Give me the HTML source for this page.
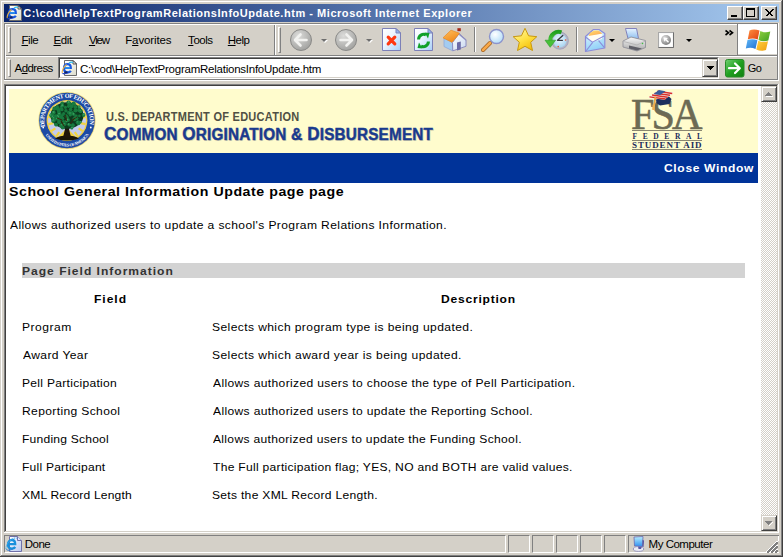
<!DOCTYPE html>
<html><head><meta charset="utf-8">
<style>
*{margin:0;padding:0;box-sizing:border-box}
html,body{width:783px;height:557px;overflow:hidden;background:#D4D0C8}
body{position:relative;font-family:"Liberation Sans",sans-serif}
.a{position:absolute}
.t{position:absolute;white-space:pre;line-height:1}
.ul{text-decoration:underline}

.btn{position:absolute;background:#D4D0C8;border-top:1px solid #fff;border-left:1px solid #fff;border-right:1px solid #404040;border-bottom:1px solid #404040;box-shadow:inset -1px -1px 0 #808080}
.sunk{position:absolute;border-top:1px solid #808080;border-left:1px solid #808080;border-right:1px solid #fff;border-bottom:1px solid #fff}
.vsep{position:absolute;width:2px;border-left:1px solid #808080;border-right:1px solid #fff}
.grip{position:absolute;width:3px;border-left:1px solid #fff;border-top:1px solid #fff;border-right:1px solid #808080;border-bottom:1px solid #808080}
</style></head><body>
<!-- window frame -->
<div class="a" style="left:0;top:0;width:783px;height:557px;background:#D4D0C8"></div>
<div class="a" style="left:1px;top:1px;width:780px;height:1px;background:#fff"></div>
<div class="a" style="left:1px;top:1px;width:1px;height:554px;background:#fff"></div>
<div class="a" style="left:781px;top:1px;width:1px;height:555px;background:#808080"></div>
<div class="a" style="left:1px;top:555px;width:781px;height:1px;background:#808080"></div>
<div class="a" style="left:782px;top:0;width:1px;height:557px;background:#404040"></div>
<div class="a" style="left:0;top:556px;width:783px;height:1px;background:#404040"></div>

<!-- title bar -->
<div class="a" style="left:4px;top:4px;width:775px;height:18px;background:linear-gradient(to right,#0A246A,#A6CAF0)"></div>

<!-- rebar -->
<div class="a" style="left:4px;top:23px;width:775px;height:1px;background:#808080"></div>
<div class="a" style="left:4px;top:24px;width:775px;height:1px;background:#fff"></div>
<div class="a" style="left:4px;top:23px;width:1px;height:57px;background:#808080"></div>
<div class="a" style="left:5px;top:24px;width:1px;height:56px;background:#fff"></div>
<div class="a" style="left:4px;top:79px;width:775px;height:1px;background:#808080"></div>
<div class="a" style="left:4px;top:80px;width:775px;height:1px;background:#fff"></div>
<div class="a" style="left:777px;top:23px;width:1px;height:57px;background:#808080"></div>
<div class="a" style="left:778px;top:23px;width:1px;height:58px;background:#fff"></div>
<div class="a" style="left:6px;top:55px;width:771px;height:1px;background:#808080"></div>
<div class="a" style="left:6px;top:56px;width:771px;height:1px;background:#fff"></div>

<!-- content frame -->
<div class="a" style="left:4px;top:84px;width:774px;height:1px;background:#808080"></div>
<div class="a" style="left:4px;top:84px;width:1px;height:449px;background:#808080"></div>
<div class="a" style="left:5px;top:85px;width:772px;height:1px;background:#404040"></div>
<div class="a" style="left:5px;top:85px;width:1px;height:447px;background:#404040"></div>
<div class="a" style="left:4px;top:532px;width:775px;height:1px;background:#fff"></div>
<div class="a" style="left:778px;top:84px;width:1px;height:449px;background:#fff"></div>
<div class="a" style="left:777px;top:85px;width:1px;height:447px;background:#D4D0C8"></div>
<div class="a" style="left:5px;top:531px;width:773px;height:1px;background:#D4D0C8"></div>
<div class="a" style="left:6px;top:86px;width:771px;height:445px;background:#fff"></div>

<!-- page content -->
<div class="a" style="left:9px;top:89px;width:749px;height:64px;background:#FFFCCD"></div>
<div class="a" style="left:9px;top:153px;width:749px;height:30px;background:#003399"></div>

<!-- scrollbar -->


<!-- title buttons -->
<div class="btn" style="left:727px;top:6px;width:16px;height:14px"><div class="a" style="left:3px;top:8px;width:6px;height:2px;background:#000"></div></div>
<div class="btn" style="left:743px;top:6px;width:16px;height:14px"><div class="a" style="left:2px;top:1px;width:9px;height:9px;border:1px solid #000;border-top-width:2px"></div></div>
<div class="btn" style="left:761px;top:6px;width:16px;height:14px"><svg class="a" style="left:3px;top:2px" width="9" height="8" viewBox="0 0 9 8"><path d="M0.5 0.5 L7.5 7.5 M1.5 0.5 L8.5 7.5 M7.5 0.5 L0.5 7.5 M8.5 0.5 L1.5 7.5" stroke="#000" stroke-width="1" shape-rendering="crispEdges"/></svg></div>
<!-- grips & separators -->
<div class="grip" style="left:8px;top:27px;height:26px"></div>
<div class="vsep" style="left:274px;top:25px;height:30px"></div>
<div class="grip" style="left:278px;top:27px;height:26px"></div>
<div class="vsep" style="left:474px;top:27px;height:25px"></div>
<div class="vsep" style="left:576px;top:27px;height:25px"></div>
<div class="grip" style="left:8px;top:59px;height:18px"></div>
<!-- windows logo panel -->
<div class="a" style="left:737px;top:23px;width:1px;height:32px;background:#808080"></div>
<div class="a" style="left:738px;top:24px;width:39px;height:30px;background:#fff"></div>
<!-- address box -->
<div class="a" style="left:58px;top:57px;width:661px;height:22px;background:#fff;border-top:1px solid #808080;border-left:1px solid #808080;border-right:1px solid #fff;border-bottom:1px solid #fff"><div class="a" style="left:0;top:0;width:659px;height:20px;border-top:1px solid #404040;border-left:1px solid #404040;border-right:1px solid #D4D0C8;border-bottom:1px solid #D4D0C8"></div></div>
<div class="btn" style="left:702px;top:59px;width:16px;height:18px;border-top-color:#D4D0C8;border-left-color:#D4D0C8;box-shadow:inset 1px 1px 0 #fff,inset -1px -1px 0 #808080"><svg class="a" style="left:4px;top:6px" width="7" height="4"><path d="M0 0h7v1h-1v1h-1v1h-1v1h-1v-1h-1v-1h-1v-1h-1z" fill="#000"/></svg></div>
<!-- scrollbar -->
<div class="a" style="left:761px;top:86px;width:16px;height:445px;background-color:#fff;background-image:repeating-conic-gradient(#D4D0C8 0 25%,#fff 0 50%);background-size:2px 2px;background-position:1px 0"></div>
<div class="btn" style="left:761px;top:86px;width:16px;height:16px;border-top-color:#D4D0C8;border-left-color:#D4D0C8;box-shadow:inset 1px 1px 0 #fff,inset -1px -1px 0 #808080"><svg class="a" style="left:3px;top:5px" width="8" height="5"><path d="M3 0h1v1h1v1h1v1h1v1H0V3h1V2h1V1h1z" fill="#808080"/><path d="M1 4h7v1H1z" fill="#fff"/></svg></div>
<div class="btn" style="left:761px;top:515px;width:16px;height:16px;border-top-color:#D4D0C8;border-left-color:#D4D0C8;box-shadow:inset 1px 1px 0 #fff,inset -1px -1px 0 #808080"><svg class="a" style="left:3px;top:5px" width="8" height="5"><path d="M0 0h7v1h-1v1h-1v1h-1v1h-1v-1h-1v-1h-1v-1h-1z" fill="#808080"/><path d="M4 4h1v-1h1v-1h1v-1h1v1h-1v1h-1v1h-1v1h-1z" fill="#fff"/></svg></div>
<!-- status bar -->
<div class="sunk" style="left:4px;top:535px;width:502px;height:18px"></div>
<div class="sunk" style="left:508px;top:535px;width:22px;height:18px"></div>
<div class="sunk" style="left:532px;top:535px;width:22px;height:18px"></div>
<div class="sunk" style="left:556px;top:535px;width:22px;height:18px"></div>
<div class="sunk" style="left:580px;top:535px;width:22px;height:18px"></div>
<div class="sunk" style="left:604px;top:535px;width:22px;height:18px"></div>
<div class="sunk" style="left:628px;top:535px;width:151px;height:18px;border-right:none"></div>
<div class="a" style="left:778px;top:536px;width:1px;height:5px;background:#fff"></div>
<!-- page gray bar -->
<div class="a" style="left:22px;top:263px;width:723px;height:15px;background:#D3D3D3"></div>


<!-- header texts -->
<div class="t" style="left:106px;top:111px;font-size:11px;font-weight:700;color:#505044;letter-spacing:0.27px;transform:scaleY(1.12);transform-origin:0 0">U.S. DEPARTMENT OF EDUCATION</div>
<div class="t" id="cod" style="left:103.5px;top:124.5px;font-weight:700;color:#1A3A8E;text-shadow:1px 1px 0 #D8D4B0;letter-spacing:0.22px;-webkit-text-stroke:0.45px #1A3A8E;transform:scaleX(0.925);transform-origin:0 0"><span style="font-size:18.5px">C</span><span style="font-size:16.5px">OMMON </span><span style="font-size:18.5px">O</span><span style="font-size:16.5px">RIGINATION </span><span style="font-size:17px">&amp; </span><span style="font-size:18.5px">D</span><span style="font-size:16.5px">ISBURSEMENT</span></div>
<div class="t" id="fsa" style="left:630.5px;top:93.3px;font-family:'Liberation Serif';font-size:43.5px;color:#6C6A54;letter-spacing:-3px;transform:scaleX(0.97);-webkit-text-stroke:0.6px #6C6A54;transform-origin:0 0">FSA</div>
<div class="a" style="left:632px;top:130px;width:70px;height:1px;background:#8A8670"></div>
<div class="t" style="left:632.5px;top:132.5px;font-family:'Liberation Serif';font-size:7.5px;font-weight:700;color:#1C2C5C;letter-spacing:5.6px">FEDERAL</div>
<div class="a" style="left:632px;top:140px;width:70px;height:1px;background:#8A8670"></div>
<div class="t" style="left:632px;top:141px;font-family:'Liberation Serif';font-size:9px;font-weight:700;color:#1C2C5C;letter-spacing:0.9px">STUDENT AID</div>
<div class="a" style="left:632px;top:149px;width:70px;height:1px;background:#8A8670"></div>
<svg class="a" style="left:0;top:0" width="783" height="183" viewBox="0 0 783 183">
<defs>
<path id="arcTop" d="M45.08 126.78A22.8 22.8 0 1 1 88.92 126.78"/>
<path id="arcBot" d="M44.95 134.28A26.0 26.0 0 0 0 89.05 134.28"/>
<radialGradient id="gfield" cx="0.5" cy="0.5" r="0.5"><stop offset="0" stop-color="#D8DCF0"/><stop offset="1" stop-color="#B8C4E8"/></radialGradient>
</defs>
<!-- seal -->
<circle cx="67" cy="120.5" r="28.6" fill="#E6D27A"/>
<circle cx="67" cy="120.5" r="27.8" fill="#1C4AA4"/>
<circle cx="67" cy="120.5" r="20.4" fill="#F0D048"/>
<circle cx="67" cy="120.5" r="19" fill="#C4CCEC"/>
<path d="M85.6 116.8L80.7 117.8 M82.8 109.9L78.6 112.7 M77.6 104.7L74.8 108.9 M70.7 101.9L69.7 106.8 M63.3 101.9L64.3 106.8 M56.4 104.7L59.2 108.9 M51.2 109.9L55.4 112.7 M48.4 116.8L53.3 117.8 M48.4 124.2L53.3 123.2 M51.2 131.1L55.4 128.3 M56.4 136.3L59.2 132.1 M63.3 139.1L64.3 134.2 M70.7 139.1L69.7 134.2 M77.6 136.3L74.8 132.1 M82.8 131.1L78.6 128.3 M85.6 124.2L80.7 123.2" stroke="#F2D440" stroke-width="2.2"/>
<text font-family="Liberation Serif" font-size="6.2" font-weight="bold" fill="#FFFFFF"><textPath href="#arcTop" textLength="82" lengthAdjust="spacing">DEPARTMENT OF EDUCATION</textPath></text>
<text font-family="Liberation Serif" font-size="4.1" font-weight="bold" fill="#FFFFFF"><textPath href="#arcBot" startOffset="1" textLength="51" lengthAdjust="spacing" dominant-baseline="auto">UNITED STATES OF AMERICA</textPath></text>
<circle cx="43.2" cy="127.5" r="0.9" fill="#fff"/><circle cx="90.8" cy="127.5" r="0.9" fill="#fff"/>
<path d="M57 138L67 128L77 138Z" fill="#F0D040"/>
<path d="M55 138.5C60 134.5 74 134.5 79 138.5C73 141 61 141 55 138.5Z" fill="#1A1408"/>
<path d="M63 137.5L65 129L60.5 123.5L63.5 122.5L67 126.5L71 121L73.5 122.5L69 129L71 137.5Z" fill="#20140A"/>
<ellipse cx="67" cy="115.5" rx="16.5" ry="13.2" fill="#0C3A1E"/>
<g fill="#187A3E"><circle cx="61.3" cy="106.4" r="1.5"/><circle cx="72.8" cy="104.1" r="1.5"/><circle cx="68.8" cy="112.6" r="1.9"/><circle cx="52.0" cy="116.7" r="1.7"/><circle cx="51.3" cy="114.6" r="1.7"/><circle cx="54.3" cy="108.5" r="1.9"/><circle cx="70.2" cy="113.5" r="2.0"/><circle cx="80.0" cy="110.4" r="1.7"/><circle cx="60.8" cy="125.7" r="1.8"/><circle cx="56.3" cy="118.9" r="1.7"/><circle cx="72.4" cy="112.8" r="1.7"/><circle cx="69.2" cy="103.8" r="1.9"/><circle cx="73.8" cy="114.4" r="1.7"/><circle cx="61.0" cy="119.0" r="1.7"/><circle cx="65.9" cy="110.7" r="1.7"/><circle cx="77.8" cy="122.3" r="2.1"/><circle cx="58.5" cy="118.7" r="1.9"/><circle cx="75.5" cy="110.4" r="2.0"/><circle cx="64.6" cy="124.0" r="2.1"/><circle cx="55.3" cy="116.2" r="1.5"/><circle cx="76.8" cy="118.6" r="1.7"/><circle cx="80.6" cy="111.1" r="2.1"/><circle cx="74.3" cy="119.2" r="2.0"/><circle cx="70.3" cy="115.2" r="1.4"/><circle cx="66.6" cy="121.3" r="1.4"/><circle cx="78.8" cy="110.3" r="1.7"/><circle cx="63.5" cy="121.4" r="1.4"/><circle cx="50.8" cy="115.4" r="1.5"/><circle cx="54.5" cy="109.2" r="1.4"/><circle cx="52.8" cy="115.0" r="1.8"/><circle cx="59.7" cy="114.0" r="1.9"/><circle cx="62.6" cy="127.6" r="2.0"/><circle cx="56.2" cy="108.7" r="1.4"/><circle cx="58.2" cy="116.1" r="1.9"/><circle cx="70.6" cy="109.6" r="1.8"/><circle cx="62.9" cy="118.4" r="1.4"/><circle cx="68.0" cy="119.9" r="2.0"/><circle cx="73.7" cy="103.6" r="2.1"/><circle cx="63.7" cy="113.6" r="1.5"/><circle cx="53.6" cy="120.4" r="2.1"/><circle cx="57.3" cy="106.7" r="1.6"/><circle cx="61.9" cy="103.5" r="1.7"/><circle cx="53.6" cy="112.5" r="2.1"/><circle cx="71.5" cy="106.3" r="2.0"/><circle cx="58.8" cy="112.1" r="1.4"/><circle cx="62.7" cy="105.6" r="1.6"/><circle cx="66.3" cy="116.0" r="1.7"/><circle cx="62.0" cy="109.7" r="1.6"/><circle cx="79.0" cy="106.7" r="1.5"/><circle cx="68.5" cy="106.3" r="1.6"/><circle cx="69.0" cy="102.8" r="1.9"/><circle cx="80.2" cy="122.2" r="1.3"/><circle cx="59.1" cy="112.6" r="1.7"/><circle cx="55.8" cy="124.4" r="1.7"/><circle cx="68.6" cy="124.6" r="1.3"/><circle cx="61.5" cy="108.5" r="1.6"/><circle cx="78.6" cy="123.5" r="1.8"/><circle cx="57.9" cy="117.0" r="1.7"/><circle cx="62.4" cy="102.8" r="1.4"/><circle cx="59.1" cy="122.1" r="2.1"/><circle cx="83.5" cy="115.0" r="1.9"/><circle cx="57.7" cy="108.6" r="2.1"/><circle cx="56.9" cy="107.9" r="1.4"/><circle cx="71.8" cy="128.1" r="1.5"/><circle cx="79.4" cy="115.9" r="1.3"/><circle cx="72.9" cy="125.2" r="1.9"/><circle cx="53.0" cy="121.2" r="1.5"/><circle cx="76.3" cy="115.9" r="1.4"/><circle cx="56.2" cy="124.9" r="1.6"/><circle cx="61.6" cy="125.2" r="2.0"/><circle cx="75.4" cy="106.9" r="2.0"/><circle cx="62.3" cy="117.9" r="1.5"/><circle cx="78.9" cy="108.1" r="1.4"/><circle cx="58.8" cy="110.5" r="2.0"/><circle cx="58.4" cy="119.0" r="1.8"/><circle cx="59.1" cy="114.2" r="1.9"/><circle cx="62.4" cy="115.3" r="1.4"/><circle cx="67.6" cy="117.4" r="1.3"/><circle cx="68.3" cy="102.5" r="1.9"/><circle cx="65.4" cy="107.3" r="1.6"/><circle cx="56.0" cy="115.7" r="1.4"/><circle cx="75.4" cy="118.1" r="2.1"/><circle cx="61.4" cy="117.0" r="1.8"/><circle cx="69.4" cy="124.7" r="1.9"/><circle cx="53.7" cy="118.2" r="1.4"/></g>
<g fill="#3C9E60"><circle cx="61.7" cy="105.9" r="0.6"/><circle cx="52.4" cy="116.2" r="0.8"/><circle cx="70.0" cy="113.0" r="0.8"/><circle cx="56.8" cy="118.4" r="0.7"/><circle cx="73.4" cy="113.9" r="0.8"/><circle cx="77.5" cy="121.8" r="0.6"/><circle cx="64.3" cy="123.5" r="0.6"/><circle cx="80.3" cy="110.6" r="0.7"/><circle cx="66.4" cy="120.8" r="0.9"/><circle cx="50.6" cy="114.9" r="0.8"/><circle cx="59.4" cy="113.5" r="0.7"/><circle cx="57.7" cy="115.6" r="0.7"/><circle cx="67.6" cy="119.4" r="0.9"/><circle cx="53.7" cy="119.9" r="0.7"/><circle cx="53.5" cy="112.0" r="1.0"/><circle cx="62.4" cy="105.1" r="0.9"/><circle cx="78.9" cy="106.2" r="0.8"/><circle cx="80.6" cy="121.7" r="0.8"/><circle cx="68.6" cy="124.1" r="0.9"/><circle cx="58.4" cy="116.5" r="0.7"/><circle cx="83.8" cy="114.5" r="0.9"/><circle cx="72.0" cy="127.6" r="0.8"/><circle cx="52.8" cy="120.7" r="0.6"/><circle cx="61.3" cy="124.7" r="0.6"/><circle cx="79.2" cy="107.6" r="0.7"/><circle cx="58.7" cy="113.7" r="0.6"/><circle cx="68.7" cy="102.0" r="0.9"/><circle cx="75.6" cy="117.6" r="0.7"/><circle cx="53.5" cy="117.7" r="0.7"/></g>
<path d="M64 126L61 121M70 124L74 119M66.5 121L65.5 115M62 120L57 118M72 120L77 117" stroke="#3A240C" stroke-width="1"/>
<!-- FSA cap -->
<path d="M656 99.5L668.5 96L671.5 99L669.5 104L660 105.5L656.5 103Z" fill="#1C2E5E"/>
<path d="M648.2 97.8L658.9 90.1L673.7 92.4L664.5 99.8Z" fill="#F4EEF0"/>
<path d="M649.48 96.88L665.60 98.91 M652.05 95.03L667.81 97.14 M654.62 93.18L670.02 95.36 M657.19 91.33L672.23 93.58" stroke="#D8302A" stroke-width="1.5"/>
<path d="M653.55 93.95L658.90 90.10L665.56 91.14L660.21 94.98Z" fill="#3A5A9A"/>
<path d="M655.5 96.5L653.5 109" stroke="#E8A848" stroke-width="1.8"/>
<path d="M652.5 104.5L654.8 104.5L654.6 110L652.3 110Z" fill="#F0B050"/>
</svg>
<svg class="a" style="left:0;top:0" width="783" height="557" viewBox="0 0 783 557">
<defs>
<linearGradient id="gpg" x1="0" y1="0" x2="1" y2="1"><stop offset="0" stop-color="#FFFFFF"/><stop offset="1" stop-color="#DCDCCC"/></linearGradient>
<linearGradient id="gpgb" x1="0" y1="0" x2="1" y2="1"><stop offset="0" stop-color="#FFFFFF"/><stop offset="1" stop-color="#B8C8F0"/></linearGradient>
<linearGradient id="ge" x1="0" y1="0" x2="0" y2="1"><stop offset="0" stop-color="#30B8F8"/><stop offset="1" stop-color="#1040C8"/></linearGradient>
<linearGradient id="gmon" x1="0" y1="0" x2="0" y2="1"><stop offset="0" stop-color="#B8F0FF"/><stop offset="1" stop-color="#3090F0"/></linearGradient>
<g id="iepage">
<path d="M3.5 0.5H12L15.5 4V15.5H3.5Z" fill="url(#gpg)" stroke="#6A6A6A"/>
<path d="M12 0.5V4H15.5Z" fill="#303030" stroke="#5A5A5A" stroke-linejoin="round"/>
<path d="M12.5 1.5L14.5 3.5H12.5Z" fill="#FFFFFF"/>
</g>
<g id="iee">
<path d="M3.2 8H9.8C9.8 5.6 8.4 4.2 6.6 4.2C4.6 4.2 3 5.8 3 8.3C3 10.8 4.6 12.4 6.8 12.4C8.2 12.4 9.2 11.8 9.9 10.8" fill="none" stroke="#1858E0" stroke-width="2.2"/>
<path d="M1.2 13C0.6 11 2.5 7 5.5 4.5" fill="none" stroke="#E8B040" stroke-width="1.1"/>
<path d="M1.5 13.3C3 14.5 5.5 13.5 7.5 12.6" fill="none" stroke="#2040C0" stroke-width="1.1"/>
<path d="M8 3C9.5 2 11 1.8 12 2.5" fill="none" stroke="#30C0F0" stroke-width="1.2"/>
<rect x="4" y="7.2" width="5" height="1.4" fill="#30A0F0"/>
<rect x="3.5" y="11.5" width="3" height="1.3" fill="#101840"/>
</g>
</defs>
<!-- title bar icon -->
<g transform="translate(6,5)"><use href="#iepage"/><use href="#iee"/></g>
<!-- address icon -->
<g transform="translate(61,60)"><use href="#iepage"/><use href="#iee"/></g>
<!-- status icon -->
<g transform="translate(5,536)">
<path d="M4.5 0.5H12.5L16.5 4.5V15.5H4.5Z" fill="url(#gpgb)" stroke="#7070A8"/>
<path d="M12.5 0.5V4.5H16.5" fill="#DDE6FF" stroke="#7070A8"/>
<path d="M3.2 8.2H10.2C10.2 5.6 8.6 4 6.8 4C4.6 4 3 5.8 3 8.4C3 11 4.6 12.6 7 12.6C8.4 12.6 9.6 12 10.3 11" fill="none" stroke="#1A90DC" stroke-width="2.3"/>
<path d="M1 13C0.4 11 2.5 6.5 6 3.8C8.5 2 10.5 1.6 11.8 2.2" fill="none" stroke="#40B0F0" stroke-width="1" stroke-dasharray="1.5 0.8"/>
<path d="M1.3 13.5C3 15 6 14 8 12.8" fill="none" stroke="#2A7AD0" stroke-width="1"/>
</g>
<!-- my computer -->
<path d="M634 537L643 536.5L642.5 546.5L634.5 546Z" fill="url(#gmon)" stroke="#6A6AB0" stroke-width="0.8"/>
<path d="M642.6 540L644 540.5L643.5 547L642.5 546.5Z" fill="#5050A0"/>
<ellipse cx="638.5" cy="549" rx="5.2" ry="2.4" fill="#ECECF4" stroke="#8888B8" stroke-width="0.8"/>
<path d="M638 546.5L642 546.5L641 549L638.5 549Z" fill="#5858A8"/>
<!-- resize grip -->
<g stroke-width="1" shape-rendering="crispEdges">
<path d="M766 552.5L777.5 541" stroke="#FFFFFF"/>
<path d="M767 552.5L777.5 542M768 552.5L777.5 543" stroke="#808080"/>
<path d="M770 552.5L777.5 545" stroke="#FFFFFF"/>
<path d="M771 552.5L777.5 546M772 552.5L777.5 547" stroke="#808080"/>
<path d="M774 552.5L777.5 549" stroke="#FFFFFF"/>
<path d="M775 552.5L777.5 550M776 552.5L777.5 551" stroke="#808080"/>
</g>
</svg>
<svg class="a" style="left:0;top:0" width="783" height="90" viewBox="0 0 783 90">
<defs>
<radialGradient id="gb" cx="0.38" cy="0.3" r="0.8"><stop offset="0" stop-color="#DCDCDA"/><stop offset="1" stop-color="#9C9C9A"/></radialGradient>
<linearGradient id="gp" x1="0" y1="0" x2="1" y2="1"><stop offset="0" stop-color="#FFFFFF"/><stop offset="0.4" stop-color="#EEF6FF"/><stop offset="1" stop-color="#A8D0F8"/></linearGradient>
<linearGradient id="groof" x1="0" y1="0" x2="0.6" y2="1"><stop offset="0" stop-color="#FFC060"/><stop offset="1" stop-color="#F08818"/></linearGradient>
<linearGradient id="gwall" x1="0" y1="0" x2="1" y2="1"><stop offset="0" stop-color="#FFFFFF"/><stop offset="1" stop-color="#C8D8F0"/></linearGradient>
<linearGradient id="gstar" x1="0.2" y1="0" x2="0.8" y2="1"><stop offset="0" stop-color="#FFF6A0"/><stop offset="0.5" stop-color="#FFE040"/><stop offset="1" stop-color="#F0B800"/></linearGradient>
<radialGradient id="glens" cx="0.4" cy="0.35" r="0.7"><stop offset="0" stop-color="#FFFFFF"/><stop offset="1" stop-color="#B0DCF8"/></radialGradient>
<linearGradient id="gmail" x1="0" y1="0" x2="0.3" y2="1"><stop offset="0" stop-color="#E8FCFF"/><stop offset="1" stop-color="#90D0F8"/></linearGradient>
<linearGradient id="gletter" x1="0" y1="0" x2="1" y2="1"><stop offset="0" stop-color="#FFE070"/><stop offset="1" stop-color="#FFA050"/></linearGradient>
<linearGradient id="gprn" x1="0" y1="0" x2="0" y2="1"><stop offset="0" stop-color="#F8F8F8"/><stop offset="1" stop-color="#A8A8A8"/></linearGradient>
<linearGradient id="gpaper" x1="0" y1="0" x2="0" y2="1"><stop offset="0" stop-color="#E8F4FF"/><stop offset="1" stop-color="#90C0F0"/></linearGradient>
<radialGradient id="gmsg" cx="0.35" cy="0.3" r="0.75"><stop offset="0" stop-color="#E0E0E0"/><stop offset="1" stop-color="#7C7C7C"/></radialGradient>
<linearGradient id="ggo" x1="0" y1="0" x2="1" y2="1"><stop offset="0" stop-color="#70D070"/><stop offset="0.5" stop-color="#20A020"/><stop offset="1" stop-color="#108010"/></linearGradient>
<linearGradient id="gwo" x1="0" y1="0" x2="1" y2="1"><stop offset="0" stop-color="#FF9040"/><stop offset="1" stop-color="#E04010"/></linearGradient>
<linearGradient id="gwg" x1="0" y1="0" x2="1" y2="1"><stop offset="0" stop-color="#90D040"/><stop offset="1" stop-color="#40A020"/></linearGradient>
<linearGradient id="gwb" x1="0" y1="0" x2="1" y2="1"><stop offset="0" stop-color="#60B8F8"/><stop offset="1" stop-color="#2070D0"/></linearGradient>
<linearGradient id="gwy" x1="0" y1="0" x2="1" y2="1"><stop offset="0" stop-color="#FFD040"/><stop offset="1" stop-color="#F0A010"/></linearGradient>
<radialGradient id="gclock" cx="0.45" cy="0.4" r="0.6"><stop offset="0" stop-color="#F0FAFF"/><stop offset="1" stop-color="#A8D4F0"/></radialGradient>
<linearGradient id="garr" x1="0" y1="0" x2="0" y2="1"><stop offset="0" stop-color="#20A020"/><stop offset="1" stop-color="#50C840"/></linearGradient>
</defs>
<!-- back -->
<circle cx="301" cy="40" r="10.5" fill="url(#gb)" stroke="#8A8A88" stroke-width="1"/>
<path d="M306.5 40H295.5M300.5 34.5L295 40L300.5 45.5" stroke="#F2F2F0" stroke-width="2.6" fill="none" stroke-linecap="round" stroke-linejoin="round"/>
<path d="M321 39h6l-3 3z" fill="#FFFFFF" transform="translate(1,1)"/>
<path d="M321 39h6l-3 3z" fill="#6E6E6E"/>
<!-- forward -->
<circle cx="346" cy="40" r="10.5" fill="url(#gb)" stroke="#8A8A88" stroke-width="1"/>
<path d="M340.5 40H351.5M346.5 34.5L352 40L346.5 45.5" stroke="#F2F2F0" stroke-width="2.6" fill="none" stroke-linecap="round" stroke-linejoin="round"/>
<path d="M366 39h6l-3 3z" fill="#FFFFFF" transform="translate(1,1)"/>
<path d="M366 39h6l-3 3z" fill="#6E6E6E"/>
<!-- stop -->
<path d="M382.5 28.5H396L400.5 33V50.5H382.5Z" fill="url(#gp)" stroke="#7C80B8"/>
<path d="M396 28.5V33H400.5Z" fill="#90B8F0" stroke="#7C80B8" stroke-linejoin="round"/>
<path d="M388.2 37.2L394.8 43.8M394.8 37.2L388.2 43.8" stroke="#FF3810" stroke-width="3.2" stroke-linecap="round"/>
<!-- refresh -->
<path d="M414.5 28.5H428L432.5 33V50.5H414.5Z" fill="url(#gp)" stroke="#7C80B8"/>
<path d="M428 28.5V33H432.5Z" fill="#90B8F0" stroke="#7C80B8" stroke-linejoin="round"/>
<path d="M418.6 39.5A5 5 0 0 1 426 35" stroke="#10A028" stroke-width="3" fill="none"/>
<path d="M424.5 32.5L429.5 33L428 38.5Z" fill="#10A028"/>
<path d="M428.4 41.5A5 5 0 0 1 421 46" stroke="#10A028" stroke-width="3" fill="none"/>
<path d="M422.5 48.5L417.5 48L419 42.5Z" fill="#10A028"/>
<!-- home -->
<path d="M444 38L452.5 42.5V50.8L444 46.5Z" fill="#A4CCF0" stroke="#90A8D8" stroke-width="0.8"/>
<path d="M452.5 42.5L459.2 33.5L466 39.8V46.3L452.8 50.8Z" fill="url(#gwall)" stroke="#8484BC" stroke-width="0.9"/>
<path d="M443 37.8L451 30.2L459.5 33.2L452 42.3Z" fill="url(#groof)" stroke="#E88A20" stroke-width="0.7" stroke-linejoin="round"/>
<path d="M459.3 33.4L466.4 39.8L465.8 40.8L459 35Z" fill="#9090C0"/>
<rect x="457.4" y="28.2" width="3.4" height="3" fill="#A82818"/>
<path d="M457 42.5L460.8 41.6V49.6L457 50.5Z" fill="#6C6CA8"/>
<!-- search -->
<path d="M490 43L483 50" stroke="#A06020" stroke-width="4" stroke-linecap="round"/>
<path d="M490 43L483 50" stroke="#F8A848" stroke-width="2.6" stroke-linecap="round"/>
<circle cx="496.5" cy="36.5" r="7" fill="url(#glens)" stroke="#8C94CC" stroke-width="1.4"/>
<!-- star -->
<path d="M525 28.3L528.6 35.8L536.8 36.7L530.7 42.3L532.5 50.5L525 46.3L517.5 50.5L519.3 42.3L513.2 36.7L521.4 35.8Z" fill="url(#gstar)" stroke="#C89810" stroke-width="1" stroke-linejoin="round"/>
<!-- history -->
<circle cx="559.8" cy="40.6" r="8.6" fill="#B4B4C4" stroke="#9C9CB8" stroke-width="0.8"/>
<circle cx="559.8" cy="40.6" r="6.8" fill="url(#gclock)"/>
<path d="M557.5 40.3L562.4 40.3M557.5 40.3L562.8 35.4" stroke="#383840" stroke-width="1.3" stroke-linecap="round"/>
<circle cx="565.6" cy="40" r="0.8" fill="#F05020"/><circle cx="558.2" cy="46.6" r="0.8" fill="#F05020"/>
<path d="M561.5 32.4A8.4 8.4 0 0 0 550.3 41" stroke="url(#garr)" stroke-width="4" fill="none"/>
<path d="M545 40.2L555.6 40.2L550.2 47.3Z" fill="#48C038" stroke="#2A9A2A" stroke-width="0.6" stroke-linejoin="round"/>
<!-- mail -->
<path d="M585.5 36.5L593.5 29.5L599 29.5L604.8 33.5V48L585.5 51.5Z" fill="url(#gmail)" stroke="#8C8CD8" stroke-width="1.2" stroke-linejoin="round"/>
<path d="M588 35.5L602.5 33.5L602 39L593 42L588.5 40Z" fill="#FFFDF4"/>
<path d="M590 33L594 30.5L598.5 30.5L602.5 33.5L588.5 36Z" fill="url(#gletter)"/>
<path d="M585.8 37.2L592.5 42.2L604.5 35.8M586 51L592.5 42.6M604.4 47.6L598.6 40.6" stroke="#8C8CD8" stroke-width="1.1" fill="none"/>
<path d="M609 39h6l-3 3z" fill="#000"/>
<!-- print -->
<path d="M625.5 28.5L636.5 28.5L638.5 38.5L628 38.5Z" fill="url(#gpaper)" stroke="#7878B8" stroke-width="0.9"/>
<path d="M623 41L631 37L645.5 40.5L645.5 47.5L637 51L623 47Z" fill="url(#gprn)" stroke="#909098" stroke-width="0.9"/>
<path d="M623.5 41.5L637 45L645.5 41" stroke="#B0B0B0" stroke-width="0.8" fill="none"/>
<path d="M629 45.5L642 48.5L637 50.5L629 48.5Z" fill="#606068"/>
<circle cx="642.5" cy="43.5" r="0.8" fill="#40C040"/>
<!-- messenger -->
<rect x="658.5" y="32.5" width="15" height="15" fill="#FFFFFF" stroke="#A8A8A8"/>
<path d="M673.5 32.5V47.5H658.5" fill="none" stroke="#6E6E6E"/>
<rect x="659.5" y="33.5" width="13" height="13" fill="none" stroke="#F8F8F8"/>
<circle cx="666" cy="40" r="5" fill="url(#gmsg)"/>
<path d="M663.5 37.5L668 38L666.5 39.2L669 41.7L668 42.7L665.5 40.2L664.3 41.7Z" fill="#FFFFFF"/>
<path d="M686 39h6l-3 3z" fill="#000"/>
<!-- chevron -->
<path d="M725.5 30.5L728.5 32.7L725.5 35M729.5 30.5L732.5 32.7L729.5 35" stroke="#000" stroke-width="1.6" fill="none"/>
<!-- windows logo -->
<path d="M749.5 30.5C752 29.2 755.5 29 759.5 30.5L757.7 39.5C754.5 38 751 38.2 747.8 39.3Z" fill="url(#gwo)"/>
<path d="M760.3 31C763.5 32.5 767 32.5 770.3 31.5L768.3 40.5C765 41.5 761.5 41.5 758.5 40Z" fill="url(#gwg)"/>
<path d="M747.5 40C750.8 38.9 754 38.8 757.4 40.3L755.5 49C752.5 47.5 749 47.5 745.8 48.5Z" fill="url(#gwb)"/>
<path d="M758.3 40.8C761.4 42.2 764.8 42.3 768 41.3L766 50C762.8 51 759.5 51 756.3 49.5Z" fill="url(#gwy)"/>
<!-- go button -->
<rect x="725.5" y="59.5" width="18.5" height="17.5" rx="2" fill="url(#ggo)" stroke="#2A8A2A" stroke-width="1"/>
<path d="M729 68.2H739.5M735 63.5L739.8 68.2L735 73" stroke="#FFFFFF" stroke-width="2.2" fill="none" stroke-linecap="round" stroke-linejoin="round"/>
</svg>

<div class="t" style="left:23.2px;top:8px;font-size:11px;font-weight:700;letter-spacing:0.538px;color:#fff">C:\cod\HelpTextProgramRelationsInfoUpdate.htm - Microsoft Internet Explorer</div>
<div class="t" style="left:21.5px;top:35px;font-size:11.5px;font-weight:400;letter-spacing:-0.433px;color:#000"><u>F</u>ile</div>
<div class="t" style="left:53.5px;top:35px;font-size:11.5px;font-weight:400;letter-spacing:-0.4px;color:#000"><u>E</u>dit</div>
<div class="t" style="left:88.9px;top:35px;font-size:11.5px;font-weight:400;letter-spacing:-1.167px;color:#000"><u>V</u>iew</div>
<div class="t" style="left:125.2px;top:35px;font-size:11.5px;font-weight:400;letter-spacing:-0.125px;color:#000">F<u>a</u>vorites</div>
<div class="t" style="left:188.1px;top:35px;font-size:11.5px;font-weight:400;letter-spacing:-0.475px;color:#000"><u>T</u>ools</div>
<div class="t" style="left:227.8px;top:35px;font-size:11.5px;font-weight:400;letter-spacing:-0.533px;color:#000"><u>H</u>elp</div>
<div class="t" style="left:14.6px;top:63px;font-size:11.5px;font-weight:400;letter-spacing:-0.583px;color:#000">A<u>d</u>dress</div>
<div class="t" style="left:80.0px;top:64px;font-size:11.5px;font-weight:400;letter-spacing:-0.239px;color:#000">C:\cod\HelpTextProgramRelationsInfoUpdate.htm</div>
<div class="t" style="left:747.8px;top:63px;font-size:11px;font-weight:400;letter-spacing:-0.5px;color:#000">Go</div>
<div class="t" style="left:664.4px;top:163px;font-size:11.5px;font-weight:700;letter-spacing:0.615px;color:#fff;transform:scaleX(1.05);transform-origin:0 0">Close Window</div>
<div class="t" style="left:8.6px;top:185px;font-size:13.5px;font-weight:700;letter-spacing:0.515px;color:#000;transform:scaleX(1.05);transform-origin:0 0">School General Information Update page page</div>
<div class="t" style="left:9.6px;top:220px;font-size:11.5px;font-weight:400;letter-spacing:0.363px;color:#000;transform:scaleX(1.05);transform-origin:0 0">Allows authorized users to update a school's Program Relations Information.</div>
<div class="t" style="left:22.3px;top:266px;font-size:11.5px;font-weight:700;letter-spacing:0.939px;color:#333;transform:scaleX(1.05);transform-origin:0 0">Page Field Information</div>
<div class="t" style="left:94.4px;top:294px;font-size:11.5px;font-weight:700;letter-spacing:0.929px;color:#000;transform:scaleX(1.05);transform-origin:0 0">Field</div>
<div class="t" style="left:441.3px;top:294px;font-size:11.5px;font-weight:700;letter-spacing:0.733px;color:#000;transform:scaleX(1.05);transform-origin:0 0">Description</div>
<div class="t" style="left:24.7px;top:539px;font-size:11.5px;font-weight:400;letter-spacing:-0.5px;color:#000">Done</div>
<div class="t" style="left:648.6px;top:539px;font-size:11.5px;font-weight:400;letter-spacing:-0.49px;color:#000">My Computer</div>
<div class="t" style="left:22.4px;top:322px;font-size:11.5px;font-weight:400;letter-spacing:0.476px;color:#000;transform:scaleX(1.05);transform-origin:0 0">Program</div>
<div class="t" style="left:23.4px;top:350px;font-size:11.5px;font-weight:400;letter-spacing:0.36px;color:#000;transform:scaleX(1.05);transform-origin:0 0">Award Year</div>
<div class="t" style="left:22.4px;top:378px;font-size:11.5px;font-weight:400;letter-spacing:0.269px;color:#000;transform:scaleX(1.05);transform-origin:0 0">Pell Participation</div>
<div class="t" style="left:22.4px;top:406px;font-size:11.5px;font-weight:400;letter-spacing:0.343px;color:#000;transform:scaleX(1.05);transform-origin:0 0">Reporting School</div>
<div class="t" style="left:22.4px;top:434px;font-size:11.5px;font-weight:400;letter-spacing:0.205px;color:#000;transform:scaleX(1.05);transform-origin:0 0">Funding School</div>
<div class="t" style="left:22.4px;top:462px;font-size:11.5px;font-weight:400;letter-spacing:0.21px;color:#000;transform:scaleX(1.05);transform-origin:0 0">Full Participant</div>
<div class="t" style="left:22.4px;top:490px;font-size:11.5px;font-weight:400;letter-spacing:0.167px;color:#000;transform:scaleX(1.05);transform-origin:0 0">XML Record Length</div>
<div class="t" style="left:212.4px;top:322px;font-size:11.5px;font-weight:400;letter-spacing:0.379px;color:#000;transform:scaleX(1.05);transform-origin:0 0">Selects which program type is being updated.</div>
<div class="t" style="left:212.4px;top:350px;font-size:11.5px;font-weight:400;letter-spacing:0.4px;color:#000;transform:scaleX(1.05);transform-origin:0 0">Selects which award year is being updated.</div>
<div class="t" style="left:213.4px;top:378px;font-size:11.5px;font-weight:400;letter-spacing:0.333px;color:#000;transform:scaleX(1.05);transform-origin:0 0">Allows authorized users to choose the type of Pell Participation.</div>
<div class="t" style="left:213.4px;top:406px;font-size:11.5px;font-weight:400;letter-spacing:0.332px;color:#000;transform:scaleX(1.05);transform-origin:0 0">Allows authorized users to update the Reporting School.</div>
<div class="t" style="left:213.4px;top:434px;font-size:11.5px;font-weight:400;letter-spacing:0.302px;color:#000;transform:scaleX(1.05);transform-origin:0 0">Allows authorized users to update the Funding School.</div>
<div class="t" style="left:213.4px;top:462px;font-size:11.5px;font-weight:400;letter-spacing:0.276px;color:#000;transform:scaleX(1.05);transform-origin:0 0">The Full participation flag; YES, NO and BOTH are valid values.</div>
<div class="t" style="left:212.4px;top:490px;font-size:11.5px;font-weight:400;letter-spacing:0.278px;color:#000;transform:scaleX(1.05);transform-origin:0 0">Sets the XML Record Length.</div>
</body></html>
